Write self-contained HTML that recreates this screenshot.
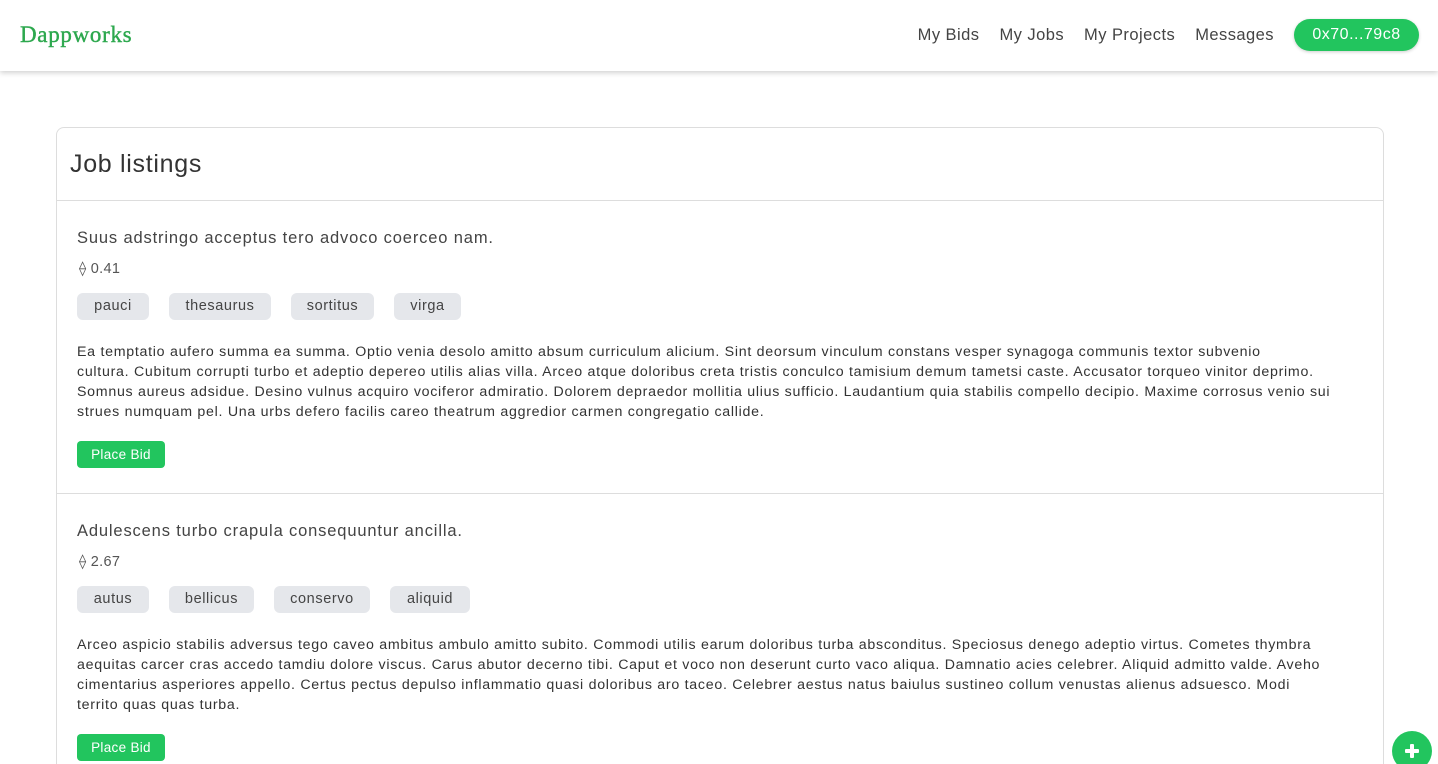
<!DOCTYPE html>
<html><head><meta charset="utf-8"><style>
*{box-sizing:border-box;margin:0;padding:0}
html,body{width:1438px;height:764px;overflow:hidden}
body{background:#fff;font-family:"Liberation Sans",sans-serif;color:#222;position:relative}
.nav{height:71px;background:#fff;box-shadow:0 2px 5px rgba(0,0,0,.18);position:relative;z-index:2}
.logo{position:absolute;left:20px;top:22px;font-family:"Liberation Serif",serif;font-size:23px;color:#2da84e;letter-spacing:.7px;-webkit-text-stroke:.4px #2da84e}
.links{position:absolute;right:19px;top:19px;display:flex;align-items:center}
.links a{font-size:16.5px;color:#444;margin-right:20px;letter-spacing:.45px}
.wallet{background:#22c55e;color:#fff;border-radius:16px;width:125px;height:32px;line-height:32px;text-align:center;font-size:16px;letter-spacing:.5px;box-shadow:0 1px 3px rgba(0,0,0,.2)}
.card{position:absolute;left:56px;top:127px;width:1328px;height:637px;border:1px solid #ddd;border-bottom:none;border-radius:8px 8px 0 0;overflow:hidden}
.card h1{font-weight:normal;font-size:25px;color:#333;padding:22px 0 0 13px;height:73px;border-bottom:1px solid #ddd;letter-spacing:.7px}
.item{position:relative;height:293px;border-bottom:1px solid #ddd}
.t{position:absolute;left:20px;top:28px;font-size:16.5px;color:#444;letter-spacing:.85px}
.p{position:absolute;left:22px;top:60px;font-size:14.5px;color:#555;letter-spacing:.3px}
.tags{position:absolute;left:20px;top:92px;display:flex}
.tag{background:#e5e7eb;border-radius:6px;height:27px;line-height:27px;font-size:14.5px;color:#444;margin-right:20px;text-align:center;letter-spacing:.6px}
.d{position:absolute;left:20px;top:141px;font-size:14.2px;line-height:20px;color:#333;white-space:nowrap;letter-spacing:.72px}
.b{position:absolute;left:20px;top:240px;background:#22c55e;color:#fff;font-size:13.5px;border-radius:4px;width:88px;height:27px;line-height:27px;text-align:center;letter-spacing:.3px}
.fab{position:absolute;left:1392px;top:731px;width:40px;height:33px;overflow:hidden}
.fab i{position:absolute;left:0;top:0;width:40px;height:40px;border-radius:50%;background:#22c55e}
.fab i:before{content:"";position:absolute;left:13px;top:18px;width:14px;height:4px;background:#fff;border-radius:1px}
.fab i:after{content:"";position:absolute;left:18px;top:13px;width:4px;height:14px;background:#fff;border-radius:1px}
</style></head><body>
<div class="nav"><div class="logo">Dappworks</div>
<div class="links"><a>My Bids</a><a>My Jobs</a><a>My Projects</a><a>Messages</a><div class="wallet">0x70...79c8</div></div></div>
<div class="card"><h1>Job listings</h1>
<div class="item"><div class="t">Suus adstringo acceptus tero advoco coerceo nam.</div><div class="p">⟠ 0.41</div>
<div class="tags"><div class="tag" style="width:72px">pauci</div><div class="tag" style="width:102px">thesaurus</div><div class="tag" style="width:83px">sortitus</div><div class="tag" style="width:67px">virga</div></div>
<div class="d">Ea temptatio aufero summa ea summa. Optio venia desolo amitto absum curriculum alicium. Sint deorsum vinculum constans vesper synagoga communis textor subvenio<br>cultura. Cubitum corrupti turbo et adeptio depereo utilis alias villa. Arceo atque doloribus creta tristis conculco tamisium demum tametsi caste. Accusator torqueo vinitor deprimo.<br>Somnus aureus adsidue. Desino vulnus acquiro vociferor admiratio. Dolorem depraedor mollitia ulius sufficio. Laudantium quia stabilis compello decipio. Maxime corrosus venio sui<br>strues numquam pel. Una urbs defero facilis careo theatrum aggredior carmen congregatio callide.</div>
<div class="b">Place Bid</div></div>
<div class="item"><div class="t">Adulescens turbo crapula consequuntur ancilla.</div><div class="p">⟠ 2.67</div>
<div class="tags"><div class="tag" style="width:72px">autus</div><div class="tag" style="width:85px">bellicus</div><div class="tag" style="width:96px">conservo</div><div class="tag" style="width:80px">aliquid</div></div>
<div class="d">Arceo aspicio stabilis adversus tego caveo ambitus ambulo amitto subito. Commodi utilis earum doloribus turba absconditus. Speciosus denego adeptio virtus. Cometes thymbra<br>aequitas carcer cras accedo tamdiu dolore viscus. Carus abutor decerno tibi. Caput et voco non deserunt curto vaco aliqua. Damnatio acies celebrer. Aliquid admitto valde. Aveho<br>cimentarius asperiores appello. Certus pectus depulso inflammatio quasi doloribus aro taceo. Celebrer aestus natus baiulus sustineo collum venustas alienus adsuesco. Modi<br>territo quas quas turba.</div>
<div class="b">Place Bid</div></div>
</div>
<div class="fab"><i></i></div>
</body></html>
